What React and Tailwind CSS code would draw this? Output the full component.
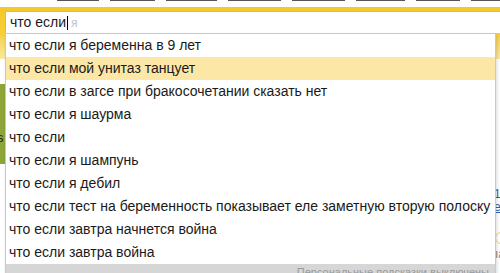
const suggestions = [
  'что если я беременна в 9 лет',
  'что если мой унитаз танцует',
  'что если в загсе при бракосочетании сказать нет',
  'что если я шаурма',
  'что если',
  'что если я шампунь',
  'что если я дебил',
  'что если тест на беременность показывает еле заметную вторую полоску',
  'что если завтра начнется война',
  'что если завтра война',
]

const navWidths = [43, 46, 53, 54, 55, 50, 45, 30]

export default function App() {
  return (
    <div
      className="relative w-[500px] h-[273px] overflow-hidden bg-white text-[#1a1a1a]"
      style={{ fontFamily: '"Liberation Sans", Arial, sans-serif' }}
    >
      {/* cut off nav links above the search box */}
      <div className="flex h-[7px] items-start gap-[11px] pl-[57px]">
        {navWidths.map((w, i) => (
          <span key={i} className="block h-[1px] bg-[#555]" style={{ width: w }} />
        ))}
      </div>

      {/* search frame */}
      <div className="h-[52px] pt-[4px] pl-[5px] bg-gradient-to-b from-[#f3c928] via-[#f5cf35] to-[#fbe8a0]">
        <div className="flex h-[22px] items-center bg-white pl-[4px] text-[14px] border-t border-l border-[#b9b9b9]">
          <span>что если</span>
          <span className="ml-[1px] h-[14px] w-[1px] bg-black" />
          <span className="ml-[3px] text-[12px] text-[#c4c4c4]">я</span>
        </div>
      </div>

      {/* page content behind the dropdown */}
      <div className="flex mt-[25px]">
        <div className="flex h-[80px] w-[5px] items-end overflow-hidden pb-[20px] bg-[#8ea53a] text-[13px] leading-none text-[#222]">
          <span className="-ml-[3px]">s</span>
        </div>
      </div>
      <div className="absolute right-0 top-[188px] flex w-[5px] flex-col overflow-hidden text-[12px] leading-[13px]">
        <span className="-ml-[1px] text-[#2a5db0]">1</span>
        <span className="-ml-[1px] text-[#2a5db0] underline">e</span>
        <span className="mt-[18px] h-[12px] w-[12px] rounded-full border border-[#e7cf7b]" />
        <span className="mt-[4px] text-[#888]">ıa</span>
      </div>

      {/* suggest popup */}
      <div className="absolute left-[5px] top-[33px] w-[491px] border border-[#c9c9c9] bg-white shadow-[1px_2px_3px_rgba(0,0,0,0.15)]">
        {suggestions.map((s, i) => (
          <div
            key={i}
            className={
              'flex h-[23px] items-center whitespace-nowrap pl-[3px] text-[14px] ' +
              (i === 1 ? 'bg-[#fce7a6]' : '')
            }
          >
            {s}
          </div>
        ))}
        <div className="flex h-[20px] items-start justify-end bg-[#d6d6d6] pr-[6px] pt-[3px] text-[11px] leading-none text-[#9a9a9a]">
          Персональные подсказки выключены
        </div>
      </div>
    </div>
  )
}
